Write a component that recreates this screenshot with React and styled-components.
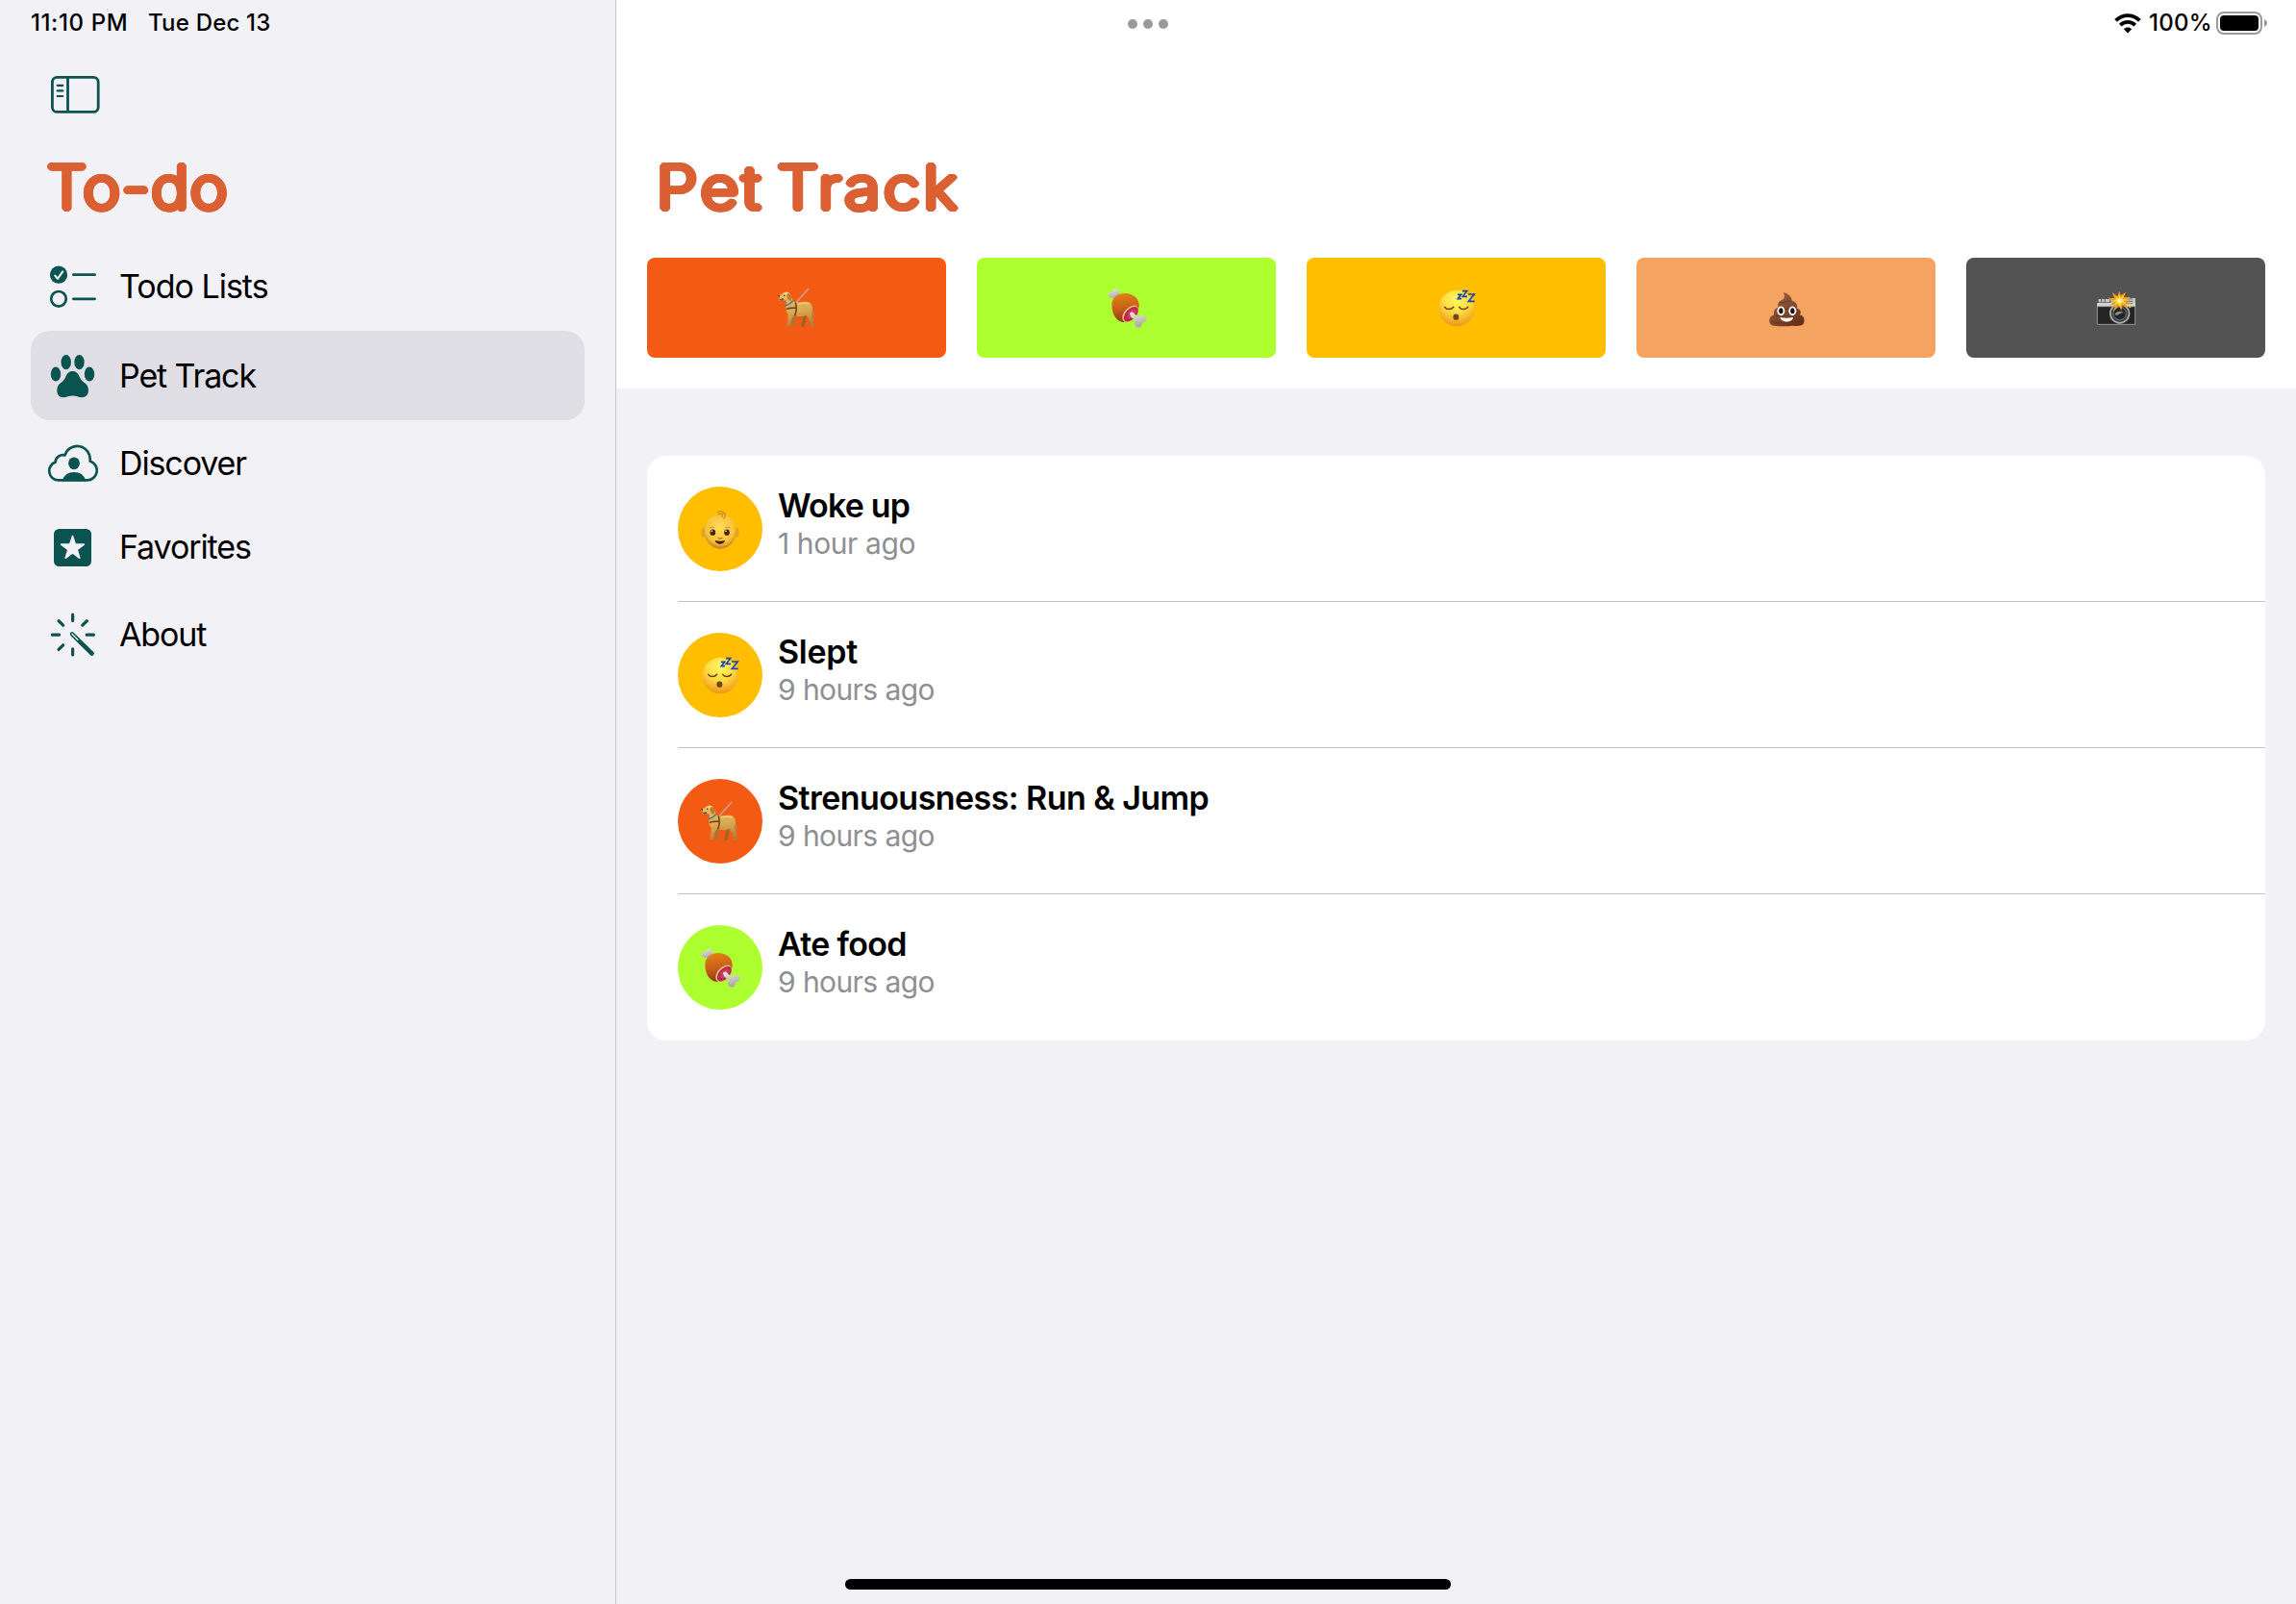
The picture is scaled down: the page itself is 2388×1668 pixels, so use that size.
import React from "react";
import styled, { createGlobalStyle } from "styled-components";

const teal = "#0b5351";
const paper = "#f2f1f6";

const Global = createGlobalStyle`
  * { box-sizing: border-box; }
  html, body, #root { margin: 0; height: 100%; }
  body {
    background: ${paper};
    color: #000;
    font-family: Inter, "Liberation Sans", sans-serif;
    overflow: hidden;
  }
  h1, p, ul { margin: 0; padding: 0; }
  svg { display: block; flex: none; }
`;

const Screen = styled.div`
  position: relative;
  display: grid;
  grid-template-columns: 641px 1fr;
  width: 2388px;
  height: 1668px;
  background: ${paper};
`;

const Sidebar = styled.aside`
  display: flex;
  flex-direction: column;
  border-right: 1px solid #c6c6c9;
`;

const Main = styled.main`
  display: flex;
  flex-direction: column;
`;

const StatusLeft = styled.div`
  display: flex;
  align-items: center;
  height: 48px;
  padding-left: 32px;
  gap: 21px;
`;

const StatusRight = styled.div`
  display: flex;
  align-items: center;
  justify-content: flex-end;
  height: 48px;
  padding-right: 29px;
`;

const StatusText = styled.span`
  font-size: 24px;
  line-height: 48px;
  font-weight: 500;
  white-space: pre;
  letter-spacing: ${(p) => p.$track || 0}px;
  width: ${(p) => (p.$w ? `${p.$w}px` : "auto")};
  margin-left: ${(p) => p.$ml || 0}px;
`;

const Toolbar = styled.div`
  height: 100px;
  padding: 31px 0 0 53px;
`;

const RoundTitle = styled.h1`
  align-self: flex-start;
  font-weight: 200;
  font-size: 61px;
  line-height: 94px;
  height: 96px;
  padding-left: ${(p) => p.$left}px;
  color: #db6033;
  white-space: pre;
  letter-spacing: ${(p) => p.$track}px;
  word-spacing: ${(p) => p.$word || 0}px;
  transform: scaleX(${(p) => p.$stretch || 1});
  transform-origin: ${(p) => p.$left}px 50%;
  text-shadow: 3.3px 0, 3.05px 1.26px, 2.33px 2.33px, 1.26px 3.05px,
    0 3.3px, -1.26px 3.05px, -2.33px 2.33px, -3.05px 1.26px,
    -3.3px 0, -3.05px -1.26px, -2.33px -2.33px, -1.26px -3.05px,
    0 -3.3px, 1.26px -3.05px, 2.33px -2.33px, 3.05px -1.26px;
`;

const Nav = styled.nav`
  display: flex;
  flex-direction: column;
  padding: 8px 32px 0;
`;

const NavItem = styled.a`
  display: flex;
  align-items: center;
  gap: 22px;
  height: ${(p) => p.$h}px;
  padding-left: 16px;
  border-radius: 20px;
  background: ${(p) => (p.$active ? "#dfdee4" : "transparent")};
`;

const NavLabel = styled.span`
  font-size: 34px;
  line-height: 48px;
  white-space: pre;
  letter-spacing: ${(p) => p.$track}px;
`;

const Header = styled.header`
  display: flex;
  flex-direction: column;
  height: 404px;
  background: #fff;
`;

const Actions = styled.div`
  display: grid;
  grid-template-columns: repeat(5, 311px);
  gap: 32px;
  padding: 24px 32px 0;
`;

const ActionButton = styled.button`
  display: flex;
  align-items: center;
  justify-content: center;
  height: 104px;
  border: 0;
  padding: 0;
  border-radius: 8px;
  background: ${(p) => p.$color};
`;

const Card = styled.ul`
  margin: 70px 32px 0;
  width: 1683px;
  padding-left: 32px;
  background: #fff;
  border-radius: 20px;
  list-style: none;
`;

const Entry = styled.li`
  display: flex;
  height: 152px;
  padding-top: 32px;
  gap: 16px;
  border-bottom: 1px solid #c6c6c8;
  &:last-child { border-bottom: 0; }
`;

const Avatar = styled.div`
  display: flex;
  align-items: center;
  justify-content: center;
  width: 88px;
  height: 88px;
  border-radius: 50%;
  background: ${(p) => p.$color};
`;

const EntryTitle = styled.p`
  font-size: 34px;
  font-weight: 600;
  line-height: 40px;
  white-space: pre;
  letter-spacing: ${(p) => p.$track}px;
`;

const EntryTime = styled.p`
  font-size: 30px;
  line-height: 38px;
  color: #8e8e93;
  white-space: pre;
  letter-spacing: ${(p) => p.$track}px;
`;

const Multitask = styled.div`
  position: absolute;
  top: 20px;
  left: 1173px;
  display: flex;
  gap: 6px;
`;

const Dot = styled.i`
  width: 10px;
  height: 10px;
  border-radius: 50%;
  background: #999;
`;

const HomeBar = styled.div`
  position: absolute;
  left: 879px;
  bottom: 15px;
  width: 630px;
  height: 11px;
  border-radius: 6px;
  background: #000;
`;

const WifiIcon = () => (
  <svg width="28" height="21" viewBox="0 0 28 21" fill="none" stroke="#000" strokeWidth="3.8">
    <path d="M1.6 7.3C8.6 .3 19.4 .3 26.4 7.3" />
    <path d="M6.3 12.1C10.7 7.9 17.3 7.9 21.7 12.1" />
    <path d="M14 20.4L9.9 16.2C12.2 14 15.8 14 18.1 16.2Z" fill="#000" stroke="none" />
  </svg>
);

const BatteryIcon = () => (
  <svg width="54" height="24" viewBox="0 0 54 24">
    <rect x="1" y="1" width="46" height="22" rx="7" fill="none" stroke="#9b9b9b" strokeWidth="2" />
    <rect x="4" y="4" width="40" height="16" rx="4" fill="#000" />
    <path d="M50 8C54 9.5 54 14.5 50 16Z" fill="#9b9b9b" />
  </svg>
);

const SidebarIcon = () => (
  <svg width="51" height="39" viewBox="0 0 51 39" fill="none" stroke={teal} strokeWidth="2.8">
    <rect x="1.4" y="1.4" width="47.8" height="36" rx="5" />
    <path d="M17.5 1.4V37.4" />
    <path d="M6.7 9.8H12.3M6.7 15.4H12.3M6.7 21H12.3" strokeWidth="2.2" strokeLinecap="round" />
  </svg>
);

const NavSvg = ({ children }) => (
  <svg width="54" height="48" viewBox="0 0 54 48" fill="none" stroke={teal} strokeWidth="2.7" strokeLinecap="round" strokeLinejoin="round">
    {children}
  </svg>
);

const ChecklistIcon = () => (
  <NavSvg>
    <circle cx="13" cy="11.7" r="9.1" fill={teal} stroke="none" />
    <path d="M9.2 12.6L12 15.8L17.2 8.4" stroke={paper} strokeWidth="2.1" />
    <circle cx="13" cy="36.8" r="7.8" />
    <path d="M28.3 11.7H50.6M28.3 36.8H50.6" />
  </NavSvg>
);

const PawIcon = () => (
  <NavSvg>
    <g fill={teal} stroke="none">
      <ellipse cx="10" cy="22" rx="5.2" ry="7.6" />
      <ellipse cx="20.7" cy="9.7" rx="5.2" ry="7.6" />
      <ellipse cx="34.5" cy="9.7" rx="5.2" ry="7.6" />
      <ellipse cx="45" cy="22" rx="5.2" ry="7.6" />
      <path d="M27.5 19C31.5 19 33.3 21.4 34.8 25C36.5 29 38.500 30 40.800 31.800C43 33.600 44 36.100 44 38.800C44 43.300 41.500 46.300 37.200 46.300C33.500 46.300 31 44.600 27.500 44.600S21.500 46.300 17.800 46.300C13.500 46.300 11.300 43.300 11.300 38.800C11.300 36.100 12.200 33.600 14.400 31.800C16.700 30 18.600 29 20.300 25C21.800 21.400 23.500 19 27.500 19Z" />
    </g>
  </NavSvg>
);

const CloudIcon = () => (
  <NavSvg>
    <path d="M12.400 41.400H42.200A10.200 10.200 0 0 0 45.700 21.500A13.500 14 0 0 0 19.500 15.400A7.900 7.900 0 0 0 9.600 22.600A9.700 9.700 0 0 0 12.400 41.400Z" />
    <g fill={teal} stroke="none">
      <ellipse cx="29" cy="23.800" rx="5.900" ry="6.400" />
      <path d="M16.500 42.300C18 36 23 32.900 29 32.900S40 36 41.400 42.300Z" />
    </g>
  </NavSvg>
);

const StarIcon = () => (
  <NavSvg>
    <rect x="8" y="5" width="39" height="39" rx="5.500" fill={teal} stroke="none" />
    <path d="M27.500 12.400L30.300 21.100H39.400L32.100 26.500L34.800 35.300L27.500 29.900L20.200 35.300L22.900 26.500L15.600 21.100H24.700Z" fill={paper} stroke={paper} strokeWidth="1.600" />
  </NavSvg>
);

const WandIcon = () => (
  <NavSvg>
    <path d="M27.600 3.200V9.400M27.600 38.800V45M6.400 24.200H13.600M42.200 24.200H49.400M13 9.600L17.600 14.200M42.400 9.600L37.800 14.200M13 39.400L17.600 34.800" strokeWidth="3.200" />
    <path d="M27 23.300L47.600 43.700" strokeWidth="4.500" />
    <path d="M27 23.300L33 29.400" stroke={paper} strokeWidth="1.300" />
  </NavSvg>
);

const Emoji = ({ children }) => (
  <svg width="40" height="40" viewBox="0 0 120 120" overflow="visible">{children}</svg>
);

const Dog = () => (
  <Emoji>
    <defs>
      <linearGradient id="fur" x1=".4" y1="0" x2=".6" y2="1">
        <stop offset="0" stopColor="#e8bb62" />
        <stop offset=".55" stopColor="#dba94f" />
        <stop offset="1" stopColor="#b47d38" />
      </linearGradient>
    </defs>
    <path d="M95 1L56 45" stroke="#d99a86" strokeWidth="5" strokeLinecap="round" />
    <path d="M103 46C112 55 106 75 119 89C107 88 103 72 99 62Z" fill="#b98234" />
    <path d="M76 74L80 88L72 119H82L89 88L92 68Z" fill="#966628" />
    <path d="M42 78L46 119H55L54 78Z" fill="#a87532" />
    <path d="M2 22C6 19 13 19 17 14C23 10 33 10 38 17C43 25 44 36 50 41C65 45 85 39 97 43C110 48 109 67 105 79C112 92 111 105 114 119H102C103 104 95 93 89 83C78 90 61 87 51 84C43 91 40 106 37 118H27C32 104 31 91 32 80C25 72 24 63 25 54C28 46 27 41 24 36C17 40 5 40 3 35C7 32 7 29 2 26Z" fill="url(#fur)" />
    <path d="M17 14C23 10 33 10 38 17L33 21C27 17 21 18 17 24Z" fill="#efcf82" />
    <path d="M33 15C42 17 44 32 40 39C31 37 27 27 29 19Z" fill="#b97c31" />
    <path d="M4 34L17 31L20 36C13 40 7 39 4 34Z" fill="#6e5135" />
    <path d="M1 22L6 21L6 26L2 26Z" fill="#35302c" />
    <circle cx="20" cy="22" r="2.200" fill="#342820" />
    <path d="M24 54C31 51 41 47 47 38" fill="none" stroke="#377eb5" strokeWidth="4.500" />
    <path d="M55 43Q61 66 53 85M26 64Q40 59 57 61" fill="none" stroke="#664019" strokeWidth="4.500" />
    <path d="M63 48C76 45 88 45 98 48" fill="none" stroke="#edc978" strokeWidth="4" />
  </Emoji>
);

const Meat = () => (
  <Emoji>
    <defs>
      <linearGradient id="meat" x1=".35" y1="0" x2=".5" y2="1">
        <stop offset="0" stopColor="#e08414" />
        <stop offset=".5" stopColor="#cc6018" />
        <stop offset="1" stopColor="#8a3514" />
      </linearGradient>
      <linearGradient id="bone" x1="0" y1="0" x2=".3" y2="1">
        <stop offset="0" stopColor="#eceae5" />
        <stop offset="1" stopColor="#aaa8a2" />
      </linearGradient>
    </defs>
    <path d="M31 34L19 30C5 32 -1 22 3 15C7 10 12 13 15 12C16 1 29 -2 34 5C39 12 34 20 38 26Z" fill="url(#bone)" />
    <path d="M13 50C13 28 32 15 55 15C78 15 98 30 98 52C97 80 77 103 54 105C32 106 13 86 13 50Z" fill="url(#meat)" />
    <ellipse cx="71" cy="79" rx="19" ry="31" transform="rotate(43 71 79)" fill="#efb98a" />
    <ellipse cx="73" cy="80" rx="16" ry="28" transform="rotate(43 73 80)" fill="#b9284b" />
    <ellipse cx="75" cy="79" rx="10" ry="18" transform="rotate(43 75 79)" fill="#d23c5c" />
    <path d="M69 79C70 71 82 72 85 81L98 88C108 81 120 84 122 94C123 104 111 103 108 109C107 122 95 126 87 118C81 112 87 105 86 99L73 89Z" fill="url(#bone)" />
  </Emoji>
);

const Sleep = () => (
  <Emoji>
    <defs>
      <radialGradient id="sleep" cx=".5" cy=".25" r=".75">
        <stop offset="0" stopColor="#fff95f" />
        <stop offset=".5" stopColor="#ffdb45" />
        <stop offset="1" stopColor="#ee9517" />
      </radialGradient>
    </defs>
    <circle cx="60" cy="62" r="56" fill="url(#sleep)" />
    <path d="M23 58C29 67 43 67 50 58M68 58C74 67 88 67 95 58" fill="none" stroke="#6b3d0b" strokeWidth="4.500" strokeLinecap="round" />
    <ellipse cx="58" cy="89" rx="9" ry="9.500" fill="#754813" />
    <path d="M63 19H74L64 32H75M78 8H92L79 25H93M96 18H115L97 40H116" fill="none" stroke="#1944b6" strokeWidth="5" />
  </Emoji>
);

const Poop = () => (
  <Emoji>
    <defs>
      <linearGradient id="poop" x1=".1" y1="0" x2=".8" y2="1">
        <stop offset="0" stopColor="#9b6242" />
        <stop offset=".55" stopColor="#80482d" />
        <stop offset="1" stopColor="#643018" />
      </linearGradient>
    </defs>
    <path d="M50 12C61 15 77 23 77 38C92 42 95 52 93 62C106 66 107 76 101 82C113 85 118 94 115 105C112 119 94 117 81 116C61 118 39 118 23 116C9 117 4 103 8 93C11 84 20 84 22 81C18 69 25 62 35 59C29 44 42 38 50 33C56 28 54 19 50 12Z" fill="url(#poop)" />
    <path d="M36 43C48 45 62 43 72 37M29 62C47 68 70 65 86 58M22 83C36 89 55 88 65 86M14 103C36 112 81 109 98 98" fill="none" stroke="#65331d" strokeWidth="3" opacity=".75" />
    <ellipse cx="43" cy="70" rx="12" ry="14.500" fill="#fff" />
    <ellipse cx="79" cy="70" rx="12" ry="14.500" fill="#fff" />
    <ellipse cx="43" cy="70" rx="6.500" ry="9" fill="#161412" />
    <ellipse cx="79" cy="70" rx="6.500" ry="9" fill="#161412" />
    <path d="M40 90Q61 94 81 90C78 108 45 108 40 90Z" fill="#fff" />
  </Emoji>
);

const Camera = () => (
  <Emoji>
    <path d="M5 33H40V43H5Z" fill="#c8c8c8" />
    <path d="M14 32V44M25 32V44" stroke="#606060" strokeWidth="3" />
    <rect y="30" x="43" width="77" height="23" fill="#c2c3c3" />
    <path d="M0 45H120V56H0Z" fill="#d3d3d2" />
    <path d="M1 56H119V112H1Z" fill="#252525" stroke="#bdbdbd" strokeWidth="2" />
    <path d="M88 33H111M88 40H111M88 47H111" stroke="#777" strokeWidth="3" />
    <circle cx="71" cy="78" r="32" fill="#aaaeb0" />
    <circle cx="71" cy="78" r="27" fill="#3d4244" />
    <circle cx="71" cy="78" r="20" fill="#202628" stroke="#73787a" strokeWidth="3" />
    <path d="M56 80C63 69 76 70 84 76C75 75 70 82 60 84Z" fill="#889296" />
    <path d="M70 8L74 22L90 11L84 27L105 27L90 37L110 49L89 46L96 64L80 52L76 70L69 53L51 72L58 49L39 54L53 41L34 29L55 31L47 12L64 25Z" fill="#ff9e16" />
    <path d="M70 19L74 31L84 22L80 34L94 34L82 40L91 49L77 45L72 60L66 46L54 55L60 42L48 38L61 34L58 25L67 31Z" fill="#ffdc40" />
    <circle cx="70" cy="38" r="6" fill="#fffbd8" />
    <circle cx="103" cy="57" r="3.500" fill="#ffc928" />
  </Emoji>
);

const Baby = () => (
  <Emoji>
    <defs>
      <radialGradient id="baby" cx=".5" cy=".4" r=".62">
        <stop offset="0" stopColor="#ffdc5c" />
        <stop offset=".7" stopColor="#f9c238" />
        <stop offset="1" stopColor="#b8761c" />
      </radialGradient>
    </defs>
    <ellipse cx="7" cy="71" rx="6" ry="15" fill="#e3a223" />
    <ellipse cx="113" cy="71" rx="6" ry="15" fill="#e3a223" />
    <path d="M9 66C10 34 32 16 60 15C89 16 109 35 111 66C109 98 88 122 60 122C32 122 11 98 9 66Z" fill="url(#baby)" />
    <path d="M53 8C68 -1 82 15 72 27M55 15C65 9 72 16 65 22" fill="none" stroke="#cc8821" strokeWidth="4" strokeLinecap="round" />
    <ellipse cx="37" cy="71" rx="8.500" ry="9.500" fill="#46250d" />
    <ellipse cx="81" cy="71" rx="8.500" ry="9.500" fill="#46250d" />
    <circle cx="34" cy="67" r="2.500" fill="#fff" />
    <circle cx="78" cy="67" r="2.500" fill="#fff" />
    <path d="M26 57Q35 52 42 57M76 57Q84 52 91 57" fill="none" stroke="#c28323" strokeWidth="2.500" />
    <path d="M54 88Q60 93 66 88" fill="none" stroke="#b36b16" strokeWidth="3.500" strokeLinecap="round" />
    <path d="M44 96Q60 101 75 96C73 111 47 111 44 96Z" fill="#421b0b" />
  </Emoji>
);

const navItems = [
  { label: "Todo Lists", icon: ChecklistIcon, h: 92, track: -1 },
  { label: "Pet Track", icon: PawIcon, h: 93, track: -1.12, active: true },
  { label: "Discover", icon: CloudIcon, h: 89, track: -1.12 },
  { label: "Favorites", icon: StarIcon, h: 86, track: -1.12 },
  { label: "About", icon: WandIcon, h: 96, track: -1.1 },
];

const actions = [
  { name: "Walk", color: "#f35b15", icon: Dog },
  { name: "Food", color: "#adff2f", icon: Meat },
  { name: "Sleep", color: "#ffbf00", icon: Sleep },
  { name: "Poop", color: "#f4a460", icon: Poop },
  { name: "Photo", color: "#535353", icon: Camera },
];

const entries = [
  { title: "Woke up", time: "1 hour ago", color: "#ffbf00", icon: Baby, track: -0.85, timeTrack: -0.4 },
  { title: "Slept", time: "9 hours ago", color: "#ffbf00", icon: Sleep, track: -0.3, timeTrack: -0.58 },
  { title: "Strenuousness: Run & Jump", time: "9 hours ago", color: "#f35b15", icon: Dog, track: -0.56, timeTrack: -0.58 },
  { title: "Ate food", time: "9 hours ago", color: "#adff2f", icon: Meat, track: -0.68, timeTrack: -0.58 },
];

export default function App() {
  return (
    <>
      <Global />
      <Screen>
        <Sidebar>
          <StatusLeft>
            <StatusText $w={101} $track={0.6}>11:10 PM</StatusText>
            <StatusText $track={0.2}>Tue Dec 13</StatusText>
          </StatusLeft>
          <Toolbar>
            <SidebarIcon />
          </Toolbar>
          <RoundTitle $left={49} $track={1.7} $stretch={1.07}>To-do</RoundTitle>
          <Nav>
            {navItems.map(({ label, icon: Icon, h, track, active }) => (
              <NavItem key={label} $h={h} $active={active}>
                <Icon />
                <NavLabel $track={track}>{label}</NavLabel>
              </NavItem>
            ))}
          </Nav>
        </Sidebar>
        <Main>
          <Header>
            <StatusRight>
              <WifiIcon />
              <StatusText $w={70} $ml={8} $track={0.3}>100%</StatusText>
              <BatteryIcon />
            </StatusRight>
            <Toolbar />
            <RoundTitle $left={42} $track={3.5} $word={-8} $stretch={1.12}>Pet Track</RoundTitle>
            <Actions>
              {actions.map(({ name, color, icon: Icon }) => (
                <ActionButton key={name} $color={color}>
                  <Icon />
                </ActionButton>
              ))}
            </Actions>
          </Header>
          <Card>
            {entries.map(({ title, time, color, icon: Icon, track, timeTrack }) => (
              <Entry key={title}>
                <Avatar $color={color}>
                  <Icon />
                </Avatar>
                <div>
                  <EntryTitle $track={track}>{title}</EntryTitle>
                  <EntryTime $track={timeTrack}>{time}</EntryTime>
                </div>
              </Entry>
            ))}
          </Card>
        </Main>
        <Multitask>
          <Dot />
          <Dot />
          <Dot />
        </Multitask>
        <HomeBar />
      </Screen>
    </>
  );
}
